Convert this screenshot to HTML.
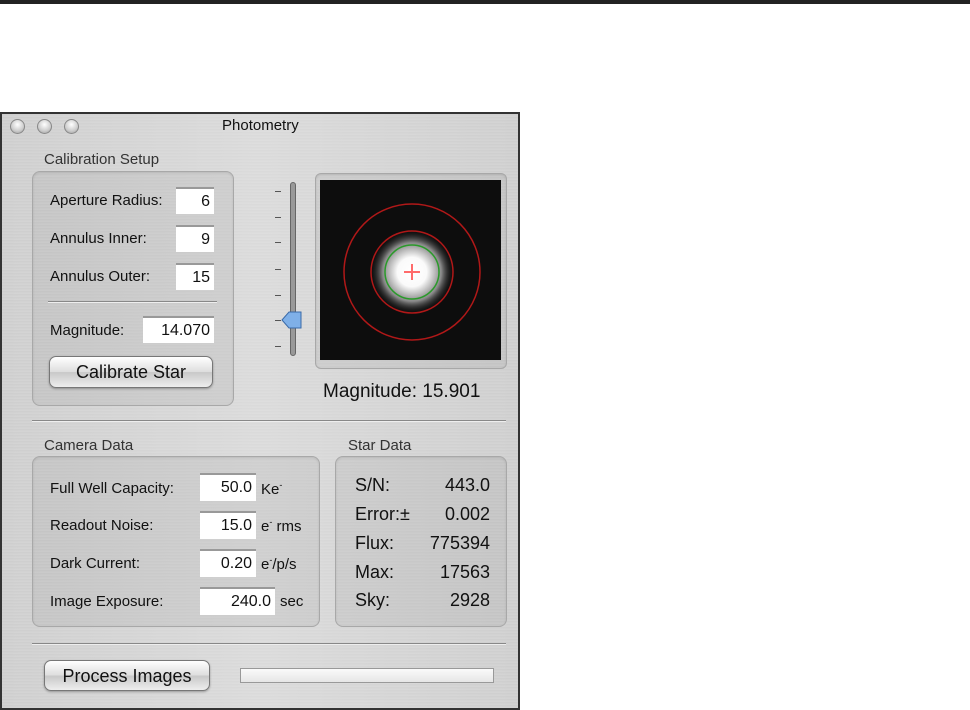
<!DOCTYPE html>
<html><head><meta charset="utf-8"><style>
*{margin:0;padding:0;box-sizing:border-box}
body{width:970px;height:710px;background:#fff;position:relative;overflow:hidden;font-family:"Liberation Sans","DejaVu Sans",sans-serif;color:#111}
.a{position:absolute}
#win{left:0;top:112px;width:520px;height:598px;border:2px solid #333;background:linear-gradient(90deg,rgba(255,255,255,0) 0,rgba(255,255,255,.25) 50%,rgba(255,255,255,0) 100%),repeating-linear-gradient(0deg,#cdcdcd 0,#d9d9d9 1px,#c8c8c8 2px,#d5d5d5 3px);}
.box{position:absolute;border:1px solid #a8a8a8;border-radius:8px;background:rgba(0,0,0,0.05);box-shadow:inset 0 1px 2px rgba(0,0,0,.1)}
.lbl{position:absolute;font-size:15px;white-space:nowrap}
.fld{position:absolute;background:#fff;border-top:2px solid #999;font-size:16px;text-align:right;padding-right:4px;line-height:26px}
.sep{position:absolute;height:2px;border-top:1px solid #888;border-bottom:1px solid #eee}
.btn{position:absolute;border:1px solid #777;border-radius:7px;background:linear-gradient(#fff,#ddd 50%,#c8c8c8 51%,#eee);font-size:18px;text-align:center;line-height:30px;box-shadow:0 1px 2px rgba(0,0,0,.3)}
.tl{position:absolute;width:15px;height:15px;border-radius:50%;background:radial-gradient(circle at 50% 35%,#fff,#ccc 60%,#999);border:1px solid #888;top:119px}
.tick{position:absolute;left:275px;width:6px;height:1px;background:#555}
.sd{position:absolute;font-size:18px;white-space:nowrap}
</style></head><body>
<div class="a" style="left:0;top:0;width:970px;height:4px;background:#222"></div>
<div id="win" class="a"></div>
<div class="tl" style="left:10px"></div><div class="tl" style="left:37px"></div><div class="tl" style="left:64px"></div>
<div class="lbl" style="left:222px;top:117px;font-size:15px">Photometry</div>

<div class="lbl" style="left:44px;top:151px;color:#333">Calibration Setup</div>
<div class="box" style="left:32px;top:171px;width:202px;height:235px"></div>
<div class="lbl" style="left:50px;top:192px">Aperture Radius:</div>
<div class="fld" style="left:176px;top:187px;width:38px;height:27px">6</div>
<div class="lbl" style="left:50px;top:230px">Annulus Inner:</div>
<div class="fld" style="left:176px;top:225px;width:38px;height:27px">9</div>
<div class="lbl" style="left:50px;top:268px">Annulus Outer:</div>
<div class="fld" style="left:176px;top:263px;width:38px;height:27px">15</div>
<div class="sep" style="left:48px;top:301px;width:169px"></div>
<div class="lbl" style="left:50px;top:322px">Magnitude:</div>
<div class="fld" style="left:143px;top:316px;width:71px;height:27px">14.070</div>
<div class="btn" style="left:49px;top:356px;width:164px;height:32px">Calibrate Star</div>

<div class="a" style="left:290px;top:182px;width:6px;height:174px;border-radius:3px;background:#999;border:1px solid #666"></div>
<div class="tick" style="top:191px"></div><div class="tick" style="top:217px"></div><div class="tick" style="top:242px"></div><div class="tick" style="top:269px"></div><div class="tick" style="top:295px"></div><div class="tick" style="top:320px"></div><div class="tick" style="top:346px"></div>
<svg class="a" style="left:280px;top:310px" width="24" height="20"><path d="M2 10 L9 2 H21 V18 H9 Z" fill="#7fb0e8" stroke="#3a6aa8"/></svg>

<div class="box" style="left:315px;top:173px;width:192px;height:196px;border-radius:6px"></div>
<div class="a" style="left:320px;top:180px;width:181px;height:180px;background:#0d0d0d"></div>
<svg class="a" style="left:320px;top:180px" width="181" height="180">
<defs><radialGradient id="g"><stop offset="0" stop-color="#fff"/><stop offset=".35" stop-color="#fafafa"/><stop offset=".7" stop-color="#888"/><stop offset="1" stop-color="#111" stop-opacity="0"/></radialGradient></defs>
<circle cx="92" cy="92" r="42" fill="url(#g)"/>
<circle cx="92" cy="92" r="68" fill="none" stroke="#b01818" stroke-width="1.5"/>
<circle cx="92" cy="92" r="41" fill="none" stroke="#b01818" stroke-width="1.5"/>
<circle cx="92" cy="92" r="27" fill="none" stroke="#2a9a2a" stroke-width="1.5"/>
<path d="M92 84V100M84 92H100" stroke="#ff6b6b" stroke-width="2"/>
</svg>
<div class="sd" style="left:323px;top:381px;font-size:19px">Magnitude: 15.901</div>

<div class="sep" style="left:32px;top:420px;width:474px"></div>

<div class="lbl" style="left:44px;top:437px;color:#333">Camera Data</div>
<div class="box" style="left:32px;top:456px;width:288px;height:171px"></div>
<div class="lbl" style="left:50px;top:480px">Full Well Capacity:</div>
<div class="fld" style="left:200px;top:473px;width:56px;height:28px">50.0</div><div class="lbl" style="left:261px;top:480px">Ke<sup style="font-size:9px">-</sup></div>
<div class="lbl" style="left:50px;top:517px">Readout Noise:</div>
<div class="fld" style="left:200px;top:511px;width:56px;height:28px">15.0</div><div class="lbl" style="left:261px;top:517px">e<sup style="font-size:9px">-</sup> rms</div>
<div class="lbl" style="left:50px;top:555px">Dark Current:</div>
<div class="fld" style="left:200px;top:549px;width:56px;height:28px">0.20</div><div class="lbl" style="left:261px;top:555px">e<sup style="font-size:9px">-</sup>/p/s</div>
<div class="lbl" style="left:50px;top:593px">Image Exposure:</div>
<div class="fld" style="left:200px;top:587px;width:75px;height:28px">240.0</div><div class="lbl" style="left:280px;top:593px">sec</div>

<div class="lbl" style="left:348px;top:437px;color:#333">Star Data</div>
<div class="box" style="left:335px;top:456px;width:172px;height:171px"></div>
<div class="sd" style="left:355px;top:475px">S/N:</div><div class="sd" style="left:355px;top:475px;width:135px;text-align:right">443.0</div>
<div class="sd" style="left:355px;top:504px">Error:±</div><div class="sd" style="left:355px;top:504px;width:135px;text-align:right">0.002</div>
<div class="sd" style="left:355px;top:533px">Flux:</div><div class="sd" style="left:355px;top:533px;width:135px;text-align:right">775394</div>
<div class="sd" style="left:355px;top:562px">Max:</div><div class="sd" style="left:355px;top:562px;width:135px;text-align:right">17563</div>
<div class="sd" style="left:355px;top:590px">Sky:</div><div class="sd" style="left:355px;top:590px;width:135px;text-align:right">2928</div>

<div class="sep" style="left:32px;top:643px;width:474px"></div>
<div class="btn" style="left:44px;top:660px;width:166px;height:31px">Process Images</div>
<div class="a" style="left:240px;top:668px;width:254px;height:15px;border:1px solid #999;background:linear-gradient(#fafafa,#e6e6e6)"></div>
</body></html>
